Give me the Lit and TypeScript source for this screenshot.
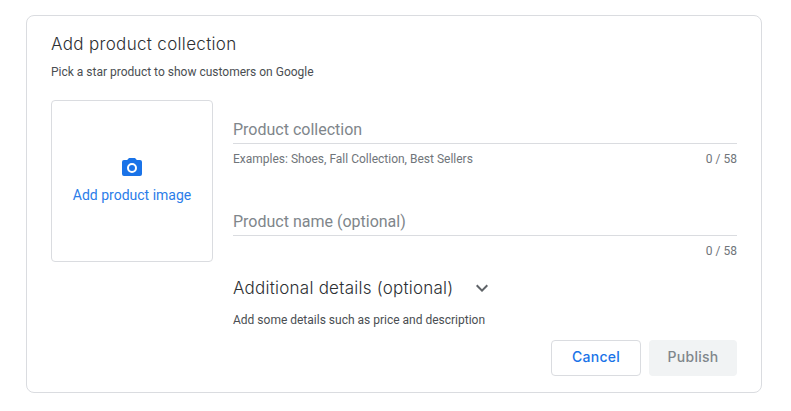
import { LitElement, html, css } from "lit";
import { customElement } from "lit/decorators.js";

@customElement("app-root")
export class AppRoot extends LitElement {
  static styles = css`
    :host { display: block; width: 791px; height: 411px; background: #fff; font-family: Roboto, sans-serif; color: #3c4043; }
    * { box-sizing: border-box; }
    .page { padding: 15px 29px 0 26px; }
    .card { width: 736px; height: 378px; border: 1px solid #dadce0; border-radius: 8px; padding: 16px 24px 0 24px; display: flex; flex-direction: column; }
    h1 { margin: 0; font: 300 17px/24px Inter, sans-serif; letter-spacing: 0.33px; color: #2d3033; height: 24px; }
    .sub { margin-top: 8px; font-size: 12px; line-height: 16px; color: #4a4e52; }
    .main { display: flex; gap: 20px; margin-top: 20px; }
    .upload { width: 162px; height: 162px; flex: none; padding-bottom: 2px; border: 1px solid #dadce0; border-radius: 4px; display: flex; flex-direction: column; align-items: center; justify-content: center; color: #2b7de9; font-size: 14px; line-height: 20px; }
    .upload svg { display: block; margin-bottom: 5px; }
    .fields { flex: 1; min-width: 0; }
    .field { height: 92px; padding-top: 18px; }
    .field.short { height: 84px; }
    .input { height: 26px; border-bottom: 1px solid #dadce0; font-size: 16px; line-height: 24px; color: #80868b; }
    .hint { display: flex; justify-content: space-between; margin-top: 7px; font-size: 12px; line-height: 16px; color: #70757a; }
    .details { display: flex; align-items: center; justify-content: space-between; width: 261px; height: 24px; font: 300 17px/24px Inter, sans-serif; letter-spacing: 0.24px; color: #2d3033; }
    .details svg { display: block; }
    .note { margin-top: 12px; font-size: 12px; line-height: 16px; color: #4a4e52; }
    .actions { display: flex; justify-content: flex-end; gap: 8px; margin-top: 12px; }
    button { width: 90px; height: 36px; border-radius: 4px; font: 500 14px/20px Inter, sans-serif; letter-spacing: 0.25px; padding: 0 0 2px; }
    .cancel { border: 1px solid #dadce0; background: #fff; color: #1a73e8; }
    .publish { width: 88px; border: 0; background: #f1f3f4; color: #80868b; }
  `;

  render() {
    return html`
      <div class="page">
        <section class="card">
          <h1>Add product collection</h1>
          <div class="sub">Pick a star product to show customers on Google</div>
          <div class="main">
            <div class="upload">
              <svg width="24" height="24" viewBox="0 0 24 24" fill="#1a73e8" aria-hidden="true">
                <path fill-rule="evenodd" d="M9 2 7.17 4H4a2 2 0 0 0-2 2v12a2 2 0 0 0 2 2h16a2 2 0 0 0 2-2V6a2 2 0 0 0-2-2h-3.17L15 2H9Zm3 15a5 5 0 1 1 0-10 5 5 0 0 1 0 10Zm0-2a3 3 0 1 0 0-6 3 3 0 0 0 0 6Z"/>
              </svg>
              <span>Add product image</span>
            </div>
            <div class="fields">
              <div class="field">
                <div class="input">Product collection</div>
                <div class="hint"><span>Examples: Shoes, Fall Collection, Best Sellers</span><span>0 / 58</span></div>
              </div>
              <div class="field short">
                <div class="input">Product name (optional)</div>
                <div class="hint"><span></span><span>0 / 58</span></div>
              </div>
              <div class="details">
                <span>Additional details (optional)</span>
                <svg width="24" height="24" viewBox="0 0 24 24" fill="#5f6368" aria-hidden="true"><path d="M7.41 8.59 12 13.17l4.59-4.58L18 10l-6 6-6-6 1.41-1.41Z"/></svg>
              </div>
              <div class="note">Add some details such as price and description</div>
            </div>
          </div>
          <div class="actions">
            <button class="cancel">Cancel</button>
            <button class="publish">Publish</button>
          </div>
        </section>
      </div>
    `;
  }
}
